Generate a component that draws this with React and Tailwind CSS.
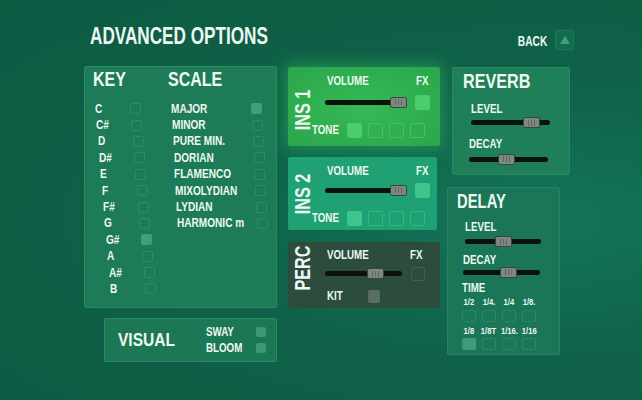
import React from "react";

const font = "font-['Liberation_Sans','Arial',sans-serif] font-bold";

const keys = ["C", "C#", "D", "D#", "E", "F", "F#", "G", "G#", "A", "A#", "B"];
const scales = ["MAJOR", "MINOR", "PURE MIN.", "DORIAN", "FLAMENCO", "MIXOLYDIAN", "LYDIAN", "HARMONIC m"];
const times = ["1/2", "1/4.", "1/4", "1/8.", "1/8", "1/8T", "1/16.", "1/16"];

// small condensed label (the game font is much narrower than Arial)
const Lbl = ({ children, className = "" }) => (
  <span className={`block whitespace-nowrap leading-none origin-left scale-x-[0.78] text-[12.5px] ${className}`}>
    {children}
  </span>
);

const Box = ({ on, className = "", offColor = "border-[#2c8c66]", onColor = "bg-[#3e9f79]" }) => (
  <div
    className={`shrink-0 rounded-[2px] border ${on ? `${onColor} border-transparent` : offColor} ${className}`}
  />
);

const Slider = ({ width, thumb, className = "" }) => (
  <div className={`relative h-[11px] ${className}`} style={{ width }}>
    <div className="absolute left-0 right-0 top-[3px] h-[5px] rounded-full bg-[#0b120e]" />
    <div
      className="absolute top-0 flex h-[11px] w-[17px] items-center justify-center gap-[2px] rounded-[2px] border border-[#39463e] bg-[#7c8880]"
      style={{ left: thumb }}
    >
      <div className="h-[6px] w-px bg-[#5d6a62]" />
      <div className="h-[6px] w-px bg-[#5d6a62]" />
      <div className="h-[6px] w-px bg-[#5d6a62]" />
    </div>
  </div>
);

const VLabel = ({ children }) => (
  <div className="ml-[4px] mt-[6px] w-[22px] shrink-0 rotate-180 text-[22.5px] leading-none text-[#eef8f1] [writing-mode:vertical-rl]">
    <span className="inline-block origin-bottom scale-y-[0.72] whitespace-nowrap">{children}</span>
  </div>
);

const InsPanel = ({ label, bg, width, height, row2, offBox, onBox, extra = "" }) => (
  <div className={`flex rounded-[2px] ${bg} ${extra}`} style={{ width, height }}>
    <VLabel>{label}</VLabel>
    <div className="ml-[-2px] flex flex-col">
      <div className="mt-[8px] flex">
        <Lbl className="ml-[15px] w-[89px]">VOLUME</Lbl>
        <Lbl>FX</Lbl>
      </div>
      <div className="flex items-center" style={{ marginTop: row2 }}>
        <Slider width={82} thumb={65} className="ml-[13px]" />
        <Box on className="ml-[8px] h-[15px] w-[15px]" offColor={offBox} onColor={onBox} />
      </div>
      <div className="mt-[13px] flex items-center">
        <Lbl className="w-[35px]">TONE</Lbl>
        <div className="flex gap-[6px]">
          {[0, 1, 2, 3].map((i) => (
            <Box key={i} on={i === 0} className="h-[15px] w-[15px]" offColor={offBox} onColor={onBox} />
          ))}
        </div>
      </div>
    </div>
  </div>
);

const App = () => {
  return (
    <div
      className={`h-[400px] w-[642px] overflow-hidden text-[#eef8f1] ${font} bg-[radial-gradient(ellipse_at_85%_55%,#137459_0%,#0f6249_45%,#0d5a43_100%)]`}
    >
      {/* header */}
      <div className="flex h-[66px] items-start pl-[90px] pr-[68px] pt-[25px]">
        <div className="origin-left scale-x-[0.73] whitespace-nowrap text-[23.5px] leading-none">ADVANCED OPTIONS</div>
        <div className="ml-auto flex items-center gap-[8px] pt-[5px]">
          <span className="origin-right scale-x-[0.68] text-[15px] leading-none">BACK</span>
          <div className="flex h-[20px] w-[19px] items-center justify-center rounded-[2px] border border-[#1f7a59] bg-[#146a4f]">
            <div className="h-0 w-0 border-x-[5px] border-b-[8px] border-x-transparent border-b-[#3aa57c]" />
          </div>
        </div>
      </div>

      <div className="flex items-start pl-[84px]">
        {/* key / scale + visual */}
        <div className="w-[193px]">
          <div className="h-[242px] rounded-[2px] border border-[#2a8a63] bg-[#1e7b57]">
            <div className="flex pt-[3px] text-[19.5px] leading-none">
              <span className="ml-[8px] w-[75px] origin-left scale-x-[0.82]">KEY</span>
              <span className="origin-left scale-x-[0.82]">SCALE</span>
            </div>
            <div className="mt-[11px] flex">
              <div className="w-[80px]">
                {keys.map((k, i) => (
                  <div key={k} className="flex h-[16.4px] items-center" style={{ paddingLeft: 10 + i * 1.35 }}>
                    <span className="w-[35px] origin-left scale-x-[0.84] text-[12px] leading-none">{k}</span>
                    <Box on={k === "G#"} className="h-[11px] w-[11px]" />
                  </div>
                ))}
              </div>
              <div>
                {scales.map((s, i) => (
                  <div key={s} className="flex h-[16.4px] items-center" style={{ paddingLeft: 6 + i * 0.85 }}>
                    <span className="w-[80px] origin-left scale-x-[0.84] whitespace-nowrap text-[12px] leading-none">{s}</span>
                    <Box on={i === 0} className="h-[11px] w-[11px]" />
                  </div>
                ))}
              </div>
            </div>
          </div>
          <div className="ml-[20px] mt-[10px] flex h-[44px] w-[173px] items-center rounded-[2px] border border-[#2a8a63] bg-[#1c7754]">
            <span className="ml-[13px] w-[88px] origin-left scale-x-[0.84] text-[18.5px] leading-none">VISUAL</span>
            <div className="flex flex-col">
              {["SWAY", "BLOOM"].map((t) => (
                <div key={t} className="flex h-[16px] items-center">
                  <Lbl className="w-[50px]">{t}</Lbl>
                  <Box on className="h-[10px] w-[10px]" onColor="bg-[#3d9874]" />
                </div>
              ))}
            </div>
          </div>
        </div>

        {/* instruments */}
        <div className="ml-[11px] w-[152px]">
          <InsPanel
            label="INS 1"
            width={152}
            height={79}
            row2={7}
            bg="bg-[radial-gradient(ellipse_at_50%_50%,#36b955_0%,#2aa64c_100%)]"
            extra="mt-[1px] shadow-[0_0_16px_3px_rgba(50,200,90,0.45)]"
            offBox="border-[#46c063]"
            onBox="bg-[#4ccc6c]"
          />
          <div className="mt-[11px]">
            <InsPanel
              label="INS 2"
              width={149}
              height={73}
              row2={5}
              bg="bg-[#20a173]"
              offBox="border-[#35b685]"
              onBox="bg-[#3cc68e]"
            />
          </div>
          <div className="mt-[12px] flex h-[66px] w-[152px] rounded-[2px] bg-[#2c4c3d]">
            <VLabel>PERC</VLabel>
            <div className="ml-[-2px] flex flex-col">
              <div className="mt-[7px] flex">
                <Lbl className="ml-[15px] w-[83px]">VOLUME</Lbl>
                <Lbl>FX</Lbl>
              </div>
              <div className="mt-[5px] flex items-center">
                <Slider width={77} thumb={42} className="ml-[13px]" />
                <Box className="ml-[9px] h-[14px] w-[14px]" offColor="border-[#41604f]" />
              </div>
              <div className="mt-[9px] flex items-center">
                <Lbl className="ml-[15px] w-[41px]">KIT</Lbl>
                <Box on className="h-[13px] w-[12px]" onColor="bg-[#5c6e63]" />
              </div>
            </div>
          </div>
        </div>

        {/* effects */}
        <div className="ml-[7px]">
          <div className="ml-[5px] mt-[1px] h-[108px] w-[118px] rounded-[2px] border border-[#2a8a63] bg-[#1f7f58]">
            <div className="ml-[10px] mt-[3px] origin-left scale-x-[0.79] text-[20.5px] leading-none">REVERB</div>
            <Lbl className="ml-[18px] mt-[11px]">LEVEL</Lbl>
            <Slider width={79} thumb={52} className="ml-[18px] mt-[2px]" />
            <Lbl className="ml-[16px] mt-[10px]">DECAY</Lbl>
            <Slider width={79} thumb={29} className="ml-[16px] mt-[3px]" />
          </div>
          <div className="mt-[12px] h-[168px] w-[113px] rounded-[2px] border border-[#248560] bg-[#1a7657]">
            <div className="ml-[9px] mt-[4px] origin-left scale-x-[0.76] text-[19.5px] leading-none">DELAY</div>
            <Lbl className="ml-[17px] mt-[9px]">LEVEL</Lbl>
            <Slider width={76} thumb={30} className="ml-[17px] mt-[3px]" />
            <Lbl className="ml-[15px] mt-[7px]">DECAY</Lbl>
            <Slider width={77} thumb={37} className="ml-[15px] mt-0" />
            <Lbl className="ml-[14px] mt-[4px]">TIME</Lbl>
            <div className="ml-[11px] mt-[4px] grid w-[80px] grid-cols-4 gap-y-[5px]">
              {times.map((t, i) => (
                <div key={t} className="flex flex-col items-center">
                  <span className="scale-x-[0.9] whitespace-nowrap text-[8.5px] leading-none">{t}</span>
                  <Box on={i === 4} className="mt-[3px] h-[12px] w-[14px]" offColor="border-[#258a62]" onColor="bg-[#3f9a77]" />
                </div>
              ))}
            </div>
          </div>
        </div>
      </div>
    </div>
  );
};

export default App;
